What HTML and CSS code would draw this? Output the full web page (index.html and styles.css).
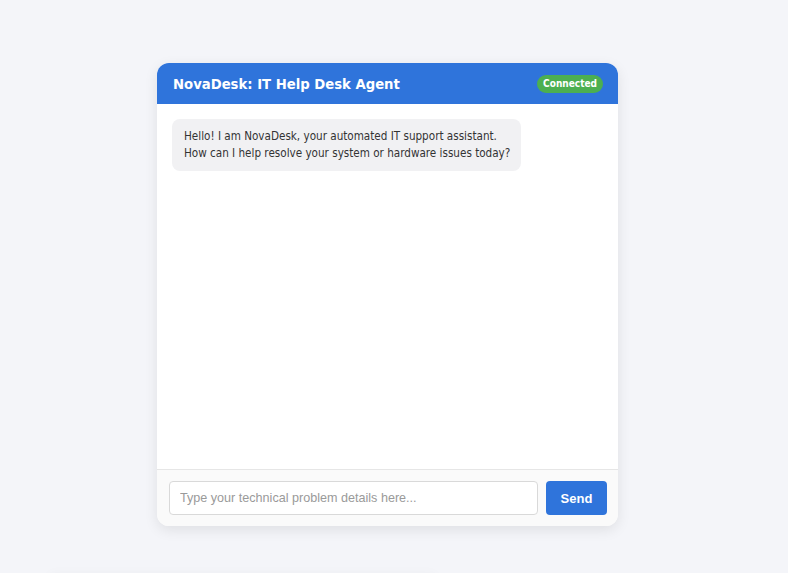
FILE: index.html
```html
<!DOCTYPE html>
<html lang="en">
<head>
<meta charset="utf-8">
<title>NovaDesk: IT Help Desk Agent</title>
<link rel="stylesheet" href="styles.css">
</head>
<body>
<div class="page">
  <div class="chat">
    <div class="chat-header">
      <h1 class="title">NovaDesk: IT Help Desk Agent</h1>
      <span class="status">Connected</span>
    </div>
    <div class="messages">
      <div class="bubble">Hello! I am NovaDesk, your automated IT support assistant.<br>How can I help resolve your system or hardware issues today?</div>
    </div>
    <div class="composer">
      <input class="field" type="text" placeholder="Type your technical problem details here...">
      <button class="send" type="button">Send</button>
    </div>
  </div>
  <div class="below"></div>
</div>
</body>
</html>
```
FILE: styles.css
```css
html, body {
  margin: 0;
  padding: 0;
  background: #f4f5f9;
}
body {
  font-family: "DejaVu Sans Condensed", "DejaVu Sans", sans-serif;
  color: #333;
}
.page {
  width: 775px;
  padding-top: 63px;
}
.chat {
  width: 461px;
  height: 463px;
  margin: 0 auto;
  background: #fff;
  border-radius: 12px;
  box-shadow: 0 4px 14px rgba(0, 0, 0, 0.09);
  display: flex;
  flex-direction: column;
  overflow: hidden;
}
.chat-header {
  height: 41px;
  flex: none;
  background: #2f74db;
  display: flex;
  align-items: center;
  justify-content: space-between;
  padding: 0 15px 0 16px;
  box-sizing: border-box;
}
.title {
  margin: 0;
  color: #fff;
  font-size: 14.7px;
  font-weight: bold;
}
.status {
  background: #4caf50;
  color: #fff;
  font-size: 10px;
  font-weight: bold;
  padding: 3px 6px 4px;
  border-radius: 10px;
}
.messages {
  flex: 1;
  padding: 15px;
}
.bubble {
  display: inline-block;
  background: #f1f1f3;
  border-radius: 8px;
  padding: 9px 11px 9px 12px;
  font-size: 11.6px;
  line-height: 17px;
  color: #333;
}
.composer {
  flex: none;
  height: 57px;
  box-sizing: border-box;
  border-top: 1px solid #e6e6e6;
  background: #fafafa;
  display: flex;
  gap: 8px;
  padding: 11px 11px 11px 12px;
}
.field {
  flex: 1;
  height: 34px;
  box-sizing: border-box;
  border: 1px solid #d9d9d9;
  border-radius: 4px;
  padding: 0 10px;
  font-family: "Liberation Sans", Arial, sans-serif;
  font-size: 12.6px;
  background: #fff;
}
.field::placeholder {
  color: #9a9a9a;
}
.send {
  width: 61px;
  height: 34px;
  border: none;
  border-radius: 4px;
  background: #2f74db;
  color: #fff;
  font-family: "Liberation Sans", Arial, sans-serif;
  font-weight: bold;
  font-size: 13px;
}
.below {
  width: 385px;
  height: 40px;
  margin: 50px 0 0 50px;
  background: #f4f5f9;
  box-shadow: 0 0 12px rgba(0, 0, 0, 0.05);
}
```
